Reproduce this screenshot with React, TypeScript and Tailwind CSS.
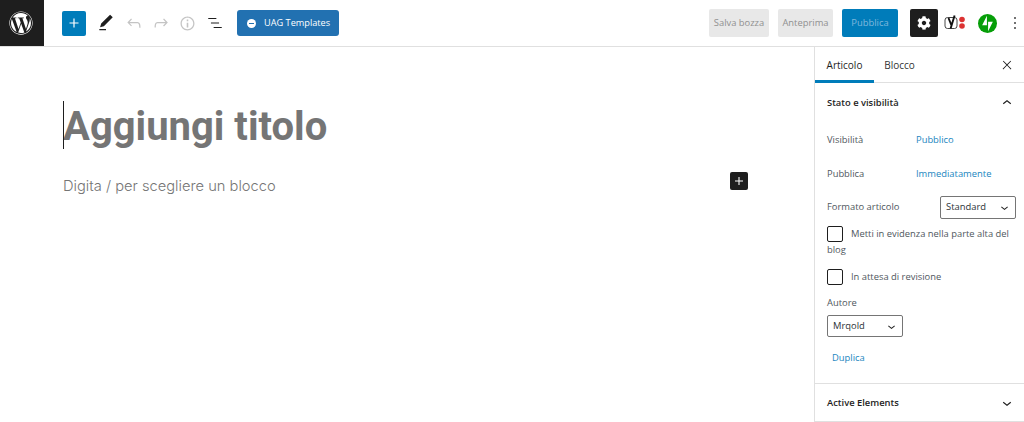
import React from "react";
import { FaWordpress, FaCog } from "react-icons/fa";

const P = ({ d, cls, size = 24 }: { d: string; cls?: string; size?: number }) => (
  <svg width={size} height={size} viewBox="0 0 24 24" className={cls} fill="currentColor"><path d={d} /></svg>
);
const Chevron = ({ up = false, size = 24 }: { up?: boolean; size?: number }) => (
  <svg width={size} height={size} viewBox="0 0 24 24" fill="currentColor" className="text-[#1e1e1e]">
    <path d={up ? "M6.5 12.4L12 8l5.5 4.4-.9 1.2L12 10l-4.5 3.6-1-1.2z" : "M17.5 11.6L12 16l-5.5-4.4.9-1.2L12 14l4.5-3.6 1 1.2z"} />
  </svg>
);

const Row = ({ label, value, cls }: { label: string; value: string; cls: string }) => (
  <div className={`flex items-center ${cls}`}>
    <span className="w-[89px] text-[#50575e]">{label}</span>
    <span className="text-[#1a86c0]">{value}</span>
  </div>
);

const Select = ({ text, cls }: { text: string; cls: string }) => (
  <div className={`border border-[#757575] rounded-[2px] flex items-center justify-between pl-[5px] pr-[3px] text-[#2c3338] ${cls}`}>
    <span>{text}</span>
    <Chevron size={15} />
  </div>
);

const Box = () => <span className="w-[16px] h-[16px] border border-[#1e1e1e] rounded-[2px] bg-white shrink-0 inline-block align-top" />;

export default function App() {
  return (
    <div className="w-[1024px] h-[422px] overflow-hidden bg-white flex flex-col font-['Open_Sans','Noto_Sans',sans-serif] text-[9.4px]">
      <header className="h-[47px] shrink-0 border-b border-[#e0e0e0] flex items-center">
        <div className="w-[44px] h-[46px] bg-[#1e1e1e] flex items-center justify-center text-white pr-[3px] pb-[1px]">
          <FaWordpress size={24} />
        </div>
        <div className="w-[24px] h-[25px] ml-[18px] bg-[#007cba] rounded-[2px] flex items-center justify-center text-white">
          <P size={18} d="M18 11.2h-5.2V6h-1.6v5.2H6v1.6h5.2V18h1.6v-5.2H18z" />
        </div>
        <P cls="ml-[10px] text-[#1e1e1e]" size={20} d="M20.1 5.1L16.9 2 6.2 12.7l-1.3 4.4 4.5-1.3L20.1 5.1zM4 20.8h8v-1.5H4v1.5z" />
        <P cls="ml-[8px] text-[#c4c4c4]" size={20} d="M18.3 11.7c-.6-.6-1.4-.9-2.3-.9H6.7l2.9-3.3-1.1-1-4.5 5L8.5 16l1-1-2.7-2.7H16c.5 0 .9.2 1.3.5 1 1 1 3.4 1 4.5v.3h1.5v-.2c0-1.5 0-4.3-1.5-5.7z" />
        <P cls="ml-[7px] text-[#c4c4c4]" size={20} d="M15.6 6.5l-1.1 1 2.9 3.3H8c-.9 0-1.7.3-2.3.9-1.4 1.5-1.4 4.2-1.4 5.6v.2h1.5v-.3c0-1.1 0-3.5 1-4.5.3-.3.7-.5 1.3-.5h9.2L14.5 15l1.1 1.1 4.6-4.6-4.6-5z" />
        <P cls="ml-[7px] text-[#c4c4c4]" size={19} d="M12 3.2c-4.8 0-8.8 3.9-8.8 8.8 0 4.8 3.9 8.8 8.8 8.8 4.8 0 8.8-3.9 8.8-8.8 0-4.8-4-8.8-8.8-8.8zm0 16c-4 0-7.2-3.3-7.2-7.2C4.8 8 8 4.8 12 4.8s7.2 3.3 7.2 7.2c0 4-3.2 7.2-7.2 7.2zM11 17h2v-6h-2v6zm0-8h2V7h-2v2z" />
        <P cls="ml-[9px] text-[#1e1e1e]" size={18} d="M13.8 5.2H3v1.5h10.8V5.2zm-3.6 12v1.5H21v-1.5H10.2zm7.2-6H6.6v1.5h10.8v-1.5z" />
        <div className="ml-[13px] w-[102px] h-[26px] bg-[#2271b1] rounded-[3px] flex items-center pl-[10px] text-white text-[9.2px] font-medium">
          <span className="w-[9px] h-[9px] rounded-full bg-white flex items-center justify-center mr-[8px]"><span className="w-[5px] h-[1px] bg-[#2271b1]" /></span>
          <span className="whitespace-nowrap">UAG Templates</span>
        </div>
        <div className="ml-auto flex items-center">
          <div className="w-[60px] h-[28px] bg-[#e8e8e8] rounded-[2px] flex items-center justify-center text-[#909090] whitespace-nowrap">Salva bozza</div>
          <div className="ml-[9px] w-[55px] h-[28px] bg-[#e8e8e8] rounded-[2px] flex items-center justify-center text-[#909090]">Anteprima</div>
          <div className="ml-[9px] w-[56px] h-[28px] bg-[#007cba] rounded-[2px] flex items-center justify-center text-[#7fb8dc]">Pubblica</div>
          <div className="ml-[12px] w-[28px] h-[28px] bg-[#1e1e1e] rounded-[2px] flex items-center justify-center text-white"><FaCog size={14} /></div>
          <div className="ml-[6px] w-[22px] h-[16px] relative flex items-center">
            <svg width="22" height="16" viewBox="0 0 22 16" fill="none">
              <rect x="1" y="2.5" width="12" height="11" rx="2.5" stroke="#333" strokeWidth="0.9" />
              <path d="M4.5 3 L7.3 10 M10.6 0.5 L6.6 13.5" stroke="#111" strokeWidth="1.9" />
              <circle cx="18" cy="4.5" r="2.8" fill="#dc3232" />
              <circle cx="18" cy="11" r="2.8" fill="#dc3232" />
            </svg>
          </div>
          <svg className="ml-[12px]" width="19" height="19" viewBox="0 0 32 32">
            <circle cx="16" cy="16" r="16" fill="#069e08" />
            <path d="M15 19H7l8-16zM17 29V13h8z" fill="#fff" />
          </svg>
          <svg className="ml-[8px] mr-[-1px] text-[#1e1e1e]" width="20" height="20" viewBox="0 0 24 24" fill="currentColor">
            <path d="M13 19h-2v-2h2v2zm0-6h-2v-2h2v2zm0-6h-2V5h2v2z" />
          </svg>
        </div>
      </header>
      <div className="flex-1 flex min-h-0">
        <main className="flex-1 relative pl-[63px]">
          <div className="mt-[55px] h-[50px] flex items-center">
            <span className="font-['Roboto',sans-serif] font-bold text-[40px] leading-none text-[#757575] whitespace-nowrap">Aggiungi titolo</span>
            <span className="absolute left-[63px] top-[54px] w-px h-[48px] bg-[#1e1e1e]" />
          </div>
          <div className="mt-[24px] font-['Inter',sans-serif] font-light text-[14.7px] leading-[20px] text-[#757575] whitespace-nowrap">Digita / per scegliere un blocco</div>
          <div className="absolute left-[730px] top-[125px] w-[18px] h-[18px] bg-[#1e1e1e] rounded-[2px] flex items-center justify-center text-white">
            <P size={16} d="M18 11.2h-5.2V6h-1.6v5.2H6v1.6h5.2V18h1.6v-5.2H18z" />
          </div>
        </main>
        <aside className="w-[210px] shrink-0 border-l border-[#e0e0e0] flex flex-col text-[#1e1e1e]">
          <div className="h-[36px] border-b border-[#e0e0e0] flex items-stretch shrink-0">
            <div className="w-[59px] border-b-[3px] border-[#007cba] -mb-px flex items-center justify-center text-[10px] font-medium"><span className="mt-[3px]">Articolo</span></div>
            <div className="w-[51px] flex items-center justify-center text-[10px] font-medium text-[#333]"><span className="mt-[1px]">Blocco</span></div>
            <div className="ml-auto mr-[10px] flex items-center">
              <P size={14} cls="text-[#1e1e1e]" d="M13 11.8l6.1-6.3-1-1-6.1 6.2-6.1-6.2-1 1 6.1 6.3-6.5 6.7 1 1 6.5-6.6 6.5 6.6 1-1z" />
            </div>
          </div>
          <div className="h-[301px] shrink-0 border-b border-[#e0e0e0] pl-[12px] pr-[8px] flex flex-col">
            <div className="mt-[12px] h-[16px] flex items-center justify-between font-semibold text-[#1e1e1e]">
              <span>Stato e visibilità</span>
              <span><Chevron up size={18} /></span>
            </div>
            <Row cls="mt-[22px] h-[14px]" label="Visibilità" value="Pubblico" />
            <Row cls="mt-[20px] h-[14px]" label="Pubblica" value="Immediatamente" />
            <div className="mt-[15px] flex items-center justify-between">
              <span className="text-[#50575e]">Formato articolo</span>
              <Select text="Standard" cls="w-[76px] h-[23px]" />
            </div>
            <div className="mt-[7px] leading-[16px] text-[#50575e]">
              <Box />
              <span className="ml-[8px]">Metti in evidenza nella parte alta del blog</span>
            </div>
            <div className="mt-[11px] flex items-center text-[#50575e]">
              <Box /><span className="ml-[8px]">In attesa di revisione</span>
            </div>
            <div className="mt-[11px] text-[#50575e] leading-[14px]">Autore</div>
            <Select text="Mrqold" cls="mt-[5px] w-[76px] h-[22px]" />
            <div className="mt-[14px] ml-[5px] text-[#1a86c0] leading-[14px]">Duplica</div>
          </div>
          <div className="h-[38px] shrink-0 border-b border-[#e0e0e0] pl-[12px] pr-[8px] pt-[1px] flex items-center justify-between font-semibold">
            <span>Active Elements</span>
            <Chevron size={18} />
          </div>
        </aside>
      </div>
    </div>
  );
}
